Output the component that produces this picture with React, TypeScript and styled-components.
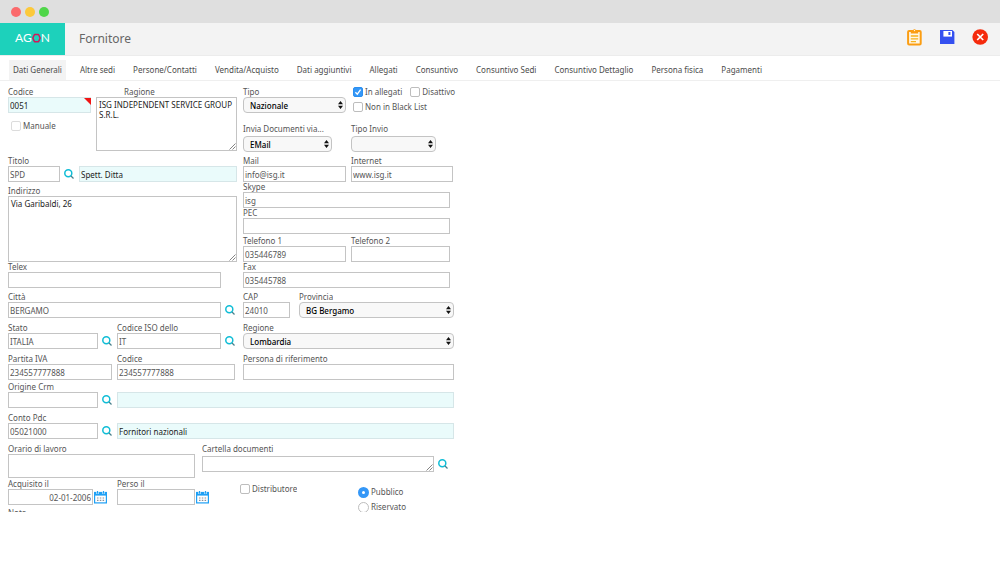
import React, { useId } from "react";
import styled, { createGlobalStyle, css } from "styled-components";

const Global = createGlobalStyle`
  *, *::before, *::after { box-sizing: border-box; }
  body { margin: 0; background: #fff; }
  body, button, input, select, textarea {
    font-family: "Noto Sans", "Open Sans", sans-serif;
    font-size: 8px;
    color: #555;
  }
`;

const TitleBar = styled.div`
  display: flex;
  align-items: center;
  gap: 4px;
  height: 23px;
  padding: 0 11px;
  background: #dfdfdf;
`;

const Dot = styled.span<{ $color: string }>`
  width: 10px;
  height: 10px;
  border-radius: 50%;
  background: ${(p) => p.$color};
`;

const Header = styled.header`
  display: flex;
  align-items: center;
  height: 33px;
  background: #f3f3f3;
  border-bottom: 1px solid #ececec;
`;

const Logo = styled.a`
  display: flex;
  align-items: center;
  justify-content: center;
  align-self: stretch;
  width: 65px;
  padding-bottom: 2px;
  background: #1dd1bb;
  color: #fff;
  font: 400 12px/12px Lato, sans-serif;
  text-decoration: none;
`;

const LogoRing = styled.svg`
  flex: none;
`;

const Title = styled.h1`
  flex: 1;
  margin: 0 0 0 14px;
  font-size: 12px;
  line-height: 16px;
  font-weight: 400;
  color: #666;
`;

const HeaderActions = styled.div`
  display: flex;
  align-items: center;
  gap: 16px;
  padding: 0 11px 4px 0;
`;

const IconButton = styled.button`
  display: block;
  flex: none;
  padding: 0;
  border: 0;
  background: none;
  line-height: 0;
  cursor: pointer;
`;

const Tabs = styled.nav`
  display: flex;
  align-items: flex-end;
  gap: 10px;
  height: 25px;
  padding-left: 9px;
  border-bottom: 1px solid #efefef;
`;

const Tab = styled.a<{ $active?: boolean }>`
  padding: 0 4px;
  line-height: 20px;
  color: #4c4c4c;
  text-decoration: none;
  white-space: nowrap;
  background: ${(p) => (p.$active ? "#f3f3f3" : "transparent")};
`;

const Form = styled.form`
  max-width: 462px;
  padding: 6px 8px 0;
`;

const Columns = styled.div`
  display: grid;
  grid-template-columns: 229fr 211fr;
  gap: 6px;
`;

const Column = styled.div`
  display: flex;
  flex-direction: column;
  min-width: 0;
`;

const Row = styled.div<{ $top?: number; $height?: number; $gap?: number }>`
  display: flex;
  align-items: flex-end;
  gap: ${(p) => p.$gap ?? 5}px;
  margin-top: ${(p) => p.$top ?? 0}px;
  ${(p) => p.$height && css`height: ${p.$height}px; align-items: flex-start;`}
`;

const FieldBox = styled.div<{ $w?: number }>`
  display: flex;
  flex-direction: column;
  min-width: 0;
  ${(p) => (p.$w ? css`flex: 0 0 ${p.$w}px;` : css`flex: 1;`)}
`;

const Label = styled.label<{ $clip?: number; $indent?: number; $loose?: boolean }>`
  height: ${(p) => (p.$loose ? 12 : 10)}px;
  line-height: 9px;
  padding-left: ${(p) => p.$indent ?? 0}px;
  white-space: nowrap;
  ${(p) => p.$clip && css`width: ${p.$clip}px; overflow: hidden;`}
`;

const control = css`
  display: block;
  width: 100%;
  margin: 0;
  border: 1px solid #c4c4c4;
  border-radius: 0;
  background: #fff;
  outline: none;
`;

const Input = styled.input<{ $tinted?: boolean; $tall?: boolean; $right?: boolean }>`
  ${control}
  height: ${(p) => (p.$tall ? 24 : 16)}px;
  padding: 1px 1px 0;
  text-align: ${(p) => (p.$right ? "right" : "left")};
  ${(p) => p.$tinted && css`background: #eafbfb; border-color: #d6e6e8; color: #222;`}
`;

const TextArea = styled.textarea<{ $h: number }>`
  ${control}
  height: ${(p) => p.$h}px;
  padding: 2px;
  line-height: 10px;
  color: #222;
  resize: none;
  overflow: hidden;
`;

const Overlay = styled.div<{ $w?: number }>`
  position: relative;
  ${(p) => p.$w && css`width: ${p.$w}px;`}
`;

const Grip = styled.svg`
  position: absolute;
  right: 1px;
  bottom: 1px;
  pointer-events: none;
`;

const Corner = styled.svg`
  position: absolute;
  right: 0;
  top: 1px;
  pointer-events: none;
`;

const Select = styled.select`
  ${control}
  appearance: none;
  height: 16px;
  padding: 0 14px 0 6px;
  border-radius: 4px;
  background: #f8f8f8;
  color: #000;
  font-weight: 500;
`;

const Arrows = styled.svg`
  position: absolute;
  right: 3px;
  top: 4px;
  pointer-events: none;
`;

const Lookup = styled(IconButton)`
  padding: 3px 0;
  margin-left: -1px;
`;

const Choices = styled.div<{ $w?: number }>`
  display: flex;
  flex-direction: column;
  gap: 5px;
  ${(p) => p.$w && css`width: ${p.$w}px;`}
`;

const ChoiceLine = styled.div`
  display: flex;
  gap: 8px;
`;

const Choice = styled.label<{ $clip?: number }>`
  display: inline-flex;
  align-items: center;
  gap: 2px;
  height: 10px;
  line-height: 10px;
  white-space: nowrap;
  ${(p) => p.$clip && css`width: ${p.$clip}px; overflow: hidden;`}
`;

const Check = styled.input`
  appearance: none;
  flex: none;
  width: 10px;
  height: 10px;
  margin: 0;
  border: 1px solid #bdbdbd;
  border-radius: 2px;
  background: #fff;
  &:checked {
    border-color: #2b8ff0;
    background: #3497f7;
  }
  &:disabled {
    border-color: #dcdcdc;
  }
`;

const CheckBoxHolder = styled.span`
  position: relative;
  display: inline-flex;
`;

const Tick = styled.svg`
  position: absolute;
  inset: 0;
  pointer-events: none;
`;

const Radio = styled.input`
  appearance: none;
  flex: none;
  width: 11px;
  height: 11px;
  margin: 0;
  border: 1px solid #bdbdbd;
  border-radius: 50%;
  background: #fff;
  &:checked {
    border: 4px solid #3497f7;
  }
`;

const Cut = styled.div`
  height: 4px;
  overflow: hidden;
`;

const ManualLine = styled.div`
  display: flex;
  padding: 8px 0 0 3px;
`;

function SearchButton({ label }: { label: string }) {
  return (
    <Lookup type="button" aria-label={label}>
      <svg width="10" height="10" viewBox="0 0 10 10" fill="none">
        <circle cx="4.3" cy="4.3" r="3.5" stroke="#10bdd6" strokeWidth="1.5" />
        <path d="M7 7l2.5 2.5" stroke="#47808c" strokeWidth="1.3" />
      </svg>
    </Lookup>
  );
}

const CalendarButtonBox = styled(IconButton)`
  margin-left: -4px;
  padding: 1px 0;
`;

function CalendarButton({ label }: { label: string }) {
  return (
    <CalendarButtonBox type="button" aria-label={label}>
      <svg width="13" height="14" viewBox="0 0 13 14">
        <rect x="0.6" y="2.5" width="11.8" height="10.4" fill="#fff" stroke="#1ea0f5" strokeWidth="1.2" />
        <path d="M0 2h13v3.6H0z" fill="#1ea0f5" />
        <path d="M3.5 1v3M9.5 1v3" stroke="#fff" strokeWidth="2.2" />
        <path d="M3.5 1v2.8M9.5 1v2.8" stroke="#1ea0f5" strokeWidth="1.2" />
        <path d="M3 8h7.5M3 10.4h7.5" stroke="#8a8f99" strokeWidth="1.2" strokeDasharray="1.5 1.3" />
      </svg>
    </CalendarButtonBox>
  );
}

type FieldProps = {
  label?: string;
  name?: string;
  w?: number;
  value?: string;
  tinted?: boolean;
  tall?: boolean;
  right?: boolean;
  required?: boolean;
};

function TextField({ label, name, w, value = "", tinted, tall, right, required }: FieldProps) {
  const id = useId();
  return (
    <FieldBox $w={w}>
      {label && <Label htmlFor={id}>{label}</Label>}
      <Overlay>
        <Input
          id={id}
          aria-label={label ? undefined : name}
          defaultValue={value}
          $tinted={tinted}
          $tall={tall}
          $right={right}
        />
        {required && (
          <Corner width="7" height="7">
            <path d="M0 0h7v7z" fill="#f01414" />
          </Corner>
        )}
      </Overlay>
    </FieldBox>
  );
}

type AreaProps = { label: string; w?: number; h: number; value?: string; indent?: number; loose?: boolean };

function AreaField({ label, w, h, value = "", indent, loose }: AreaProps) {
  const id = useId();
  return (
    <FieldBox $w={w}>
      <Label htmlFor={id} $indent={indent} $loose={loose}>{label}</Label>
      <Overlay>
        <TextArea id={id} defaultValue={value} $h={h} spellCheck={false} />
        <Grip width="7" height="7">
          <path d="M0.5 6.5l6-6M3.5 6.5l3-3" stroke="#777" strokeWidth="0.9" />
        </Grip>
      </Overlay>
    </FieldBox>
  );
}

type SelectProps = { label: string; w?: number; selectW?: number; value: string; clip?: number; loose?: boolean };

function SelectField({ label, w, selectW, value, clip, loose }: SelectProps) {
  const id = useId();
  return (
    <FieldBox $w={w}>
      <Label htmlFor={id} $clip={clip} $loose={loose}>{label}</Label>
      <Overlay $w={selectW}>
        <Select id={id} defaultValue={value}>
          <option value={value}>{value}</option>
        </Select>
        <Arrows width="5" height="8">
          <path d="M2.5 0L5 3.3H0zM2.5 8L5 4.7H0z" fill="#111" />
        </Arrows>
      </Overlay>
    </FieldBox>
  );
}

function CheckField({ label, checked, disabled, clip }: { label: string; checked?: boolean; disabled?: boolean; clip?: number }) {
  return (
    <Choice $clip={clip}>
      <CheckBoxHolder>
        <Check type="checkbox" defaultChecked={checked} disabled={disabled} />
        {checked && (
          <Tick width="10" height="10" fill="none">
            <path d="M2.4 5.2l1.9 2L7.6 2.7" stroke="#fff" strokeWidth="1.3" />
          </Tick>
        )}
      </CheckBoxHolder>
      {label}
    </Choice>
  );
}

const tabs = [
  "Dati Generali",
  "Altre sedi",
  "Persone/Contatti",
  "Vendita/Acquisto",
  "Dati aggiuntivi",
  "Allegati",
  "Consuntivo",
  "Consuntivo Sedi",
  "Consuntivo Dettaglio",
  "Persona fisica",
  "Pagamenti",
];

const DateGroup = styled.div<{ $w: number }>`
  display: flex;
  align-items: flex-end;
  gap: 5px;
  flex: 0 0 ${(p) => p.$w}px;
`;

const Flags = styled.div`
  display: flex;
  flex: 1;
  padding-top: 5px;
`;

const RadioGroup = styled(Choices)`
  padding-top: 3px;
`;

export default function App() {
  return (
    <>
      <Global />
      <TitleBar>
        <Dot $color="#fb6a6c" />
        <Dot $color="#fcc93a" />
        <Dot $color="#50d64a" />
      </TitleBar>
      <Header>
        <Logo href="#" aria-label="AGON">
          <span>AG</span>
          <LogoRing width="9" height="10" viewBox="0 0 9 10" fill="none">
            <path d="M2.5 1.5h4L8.2 5 6.5 8.7h-4L.8 5z" stroke="#d4145a" strokeWidth="1.5" strokeLinejoin="round" />
          </LogoRing>
          <span>N</span>
        </Logo>
        <Title>Fornitore</Title>
        <HeaderActions>
          <IconButton type="button" aria-label="Appunti">
            <svg width="17" height="18" viewBox="0 0 17 18" fill="none">
              <rect x="1.1" y="3" width="12.6" height="13.6" rx="1" fill="#fff7e6" stroke="#fb9d12" strokeWidth="2" />
              <path d="M3.8 2.2H6a1.6 1.6 0 0 1 3 0h2.2v3.3H3.8z" fill="#fb9d12" />
              <circle cx="7.5" cy="2.6" r="0.7" fill="#fff" />
              <path d="M3.8 8h7.4M3.8 10.8h7.4M3.8 13.6h5.2" stroke="#f7b21c" strokeWidth="1.3" />
            </svg>
          </IconButton>
          <IconButton type="button" aria-label="Salva">
            <svg width="16" height="16" viewBox="0 0 16 16">
              <path d="M0 1h12.4L14.4 3v12H0z" fill="#3450f0" />
              <path d="M3.4 2h8.6v5.6H3.4z" fill="#fff" />
              <path d="M8.4 3h2v3h-2z" fill="#3450f0" />
            </svg>
          </IconButton>
          <IconButton type="button" aria-label="Chiudi">
            <svg width="17" height="16" viewBox="0 0 17 16">
              <circle cx="8.2" cy="8" r="7.8" fill="#f52a0c" />
              <path d="M5.2 5l6 6M11.2 5l-6 6" stroke="#fff" strokeWidth="1.7" />
            </svg>
          </IconButton>
        </HeaderActions>
      </Header>
      <Tabs>
        {tabs.map((t, i) => (
          <Tab key={t} href="#" $active={i === 0}>
            {t}
          </Tab>
        ))}
      </Tabs>

      <Form>
        <Columns>
          <Column>
            <Row $height={69}>
              <FieldBox $w={83}>
                <TextField label="Codice" value="0051" tinted required />
                <ManualLine>
                  <CheckField label="Manuale" disabled />
                </ManualLine>
              </FieldBox>
              <AreaField label="Ragione" h={54} value="ISG INDEPENDENT SERVICE GROUP S.R.L." indent={28} />
            </Row>
            <Row>
              <TextField label="Titolo" w={52} value="SPD" />
              <SearchButton label="Cerca titolo" />
              <TextField name="Descrizione titolo" value="Spett. Ditta" tinted />
            </Row>
            <Row $top={4}>
              <AreaField label="Indirizzo" h={66} value="Via Garibaldi, 26" />
            </Row>
            <Row>
              <TextField label="Telex" w={213} />
            </Row>
            <Row $top={4}>
              <TextField label="Città" w={213} value="BERGAMO" />
              <SearchButton label="Cerca città" />
            </Row>
            <Row $top={5}>
              <TextField label="Stato" w={90} value="ITALIA" />
              <SearchButton label="Cerca stato" />
              <TextField label="Codice ISO dello" w={104} value="IT" />
              <SearchButton label="Cerca codice ISO" />
            </Row>
            <Row $top={5}>
              <TextField label="Partita IVA" w={104} value="234557777888" />
              <TextField label="Codice" w={118} value="234557777888" />
            </Row>
          </Column>

          <Column>
            <Row $height={37} $gap={7}>
              <SelectField label="Tipo" w={103} value="Nazionale" />
              <Choices>
                <ChoiceLine>
                  <CheckField label="In allegati" checked />
                  <CheckField label="Disattivo" />
                </ChoiceLine>
                <CheckField label="Non in Black List" />
              </Choices>
            </Row>
            <Row>
              <SelectField label="Invia Documenti via..." w={103} selectW={89} value="EMail" loose />
              <SelectField label="Tipo Invio" w={85} value="" loose />
            </Row>
            <Row $top={4}>
              <TextField label="Mail" w={103} value="info@isg.it" />
              <TextField label="Internet" w={102} value="www.isg.it" />
            </Row>
            <Row>
              <TextField label="Skype" w={207} value="isg" />
            </Row>
            <Row>
              <TextField label="PEC" w={207} />
            </Row>
            <Row $top={2}>
              <TextField label="Telefono 1" w={103} value="035446789" />
              <TextField label="Telefono 2" w={99} />
            </Row>
            <Row>
              <TextField label="Fax" w={207} value="035445788" />
            </Row>
            <Row $top={4} $gap={9}>
              <TextField label="CAP" w={47} value="24010" />
              <SelectField label="Provincia" value="BG Bergamo" clip={34} />
            </Row>
            <Row $top={5}>
              <SelectField label="Regione" value="Lombardia" />
            </Row>
            <Row $top={5}>
              <TextField label="Persona di riferimento" />
            </Row>
          </Column>
        </Columns>

        <Row $top={2}>
          <TextField label="Origine Crm" w={90} />
          <SearchButton label="Cerca origine" />
          <TextField name="Descrizione origine" tinted />
        </Row>
        <Row $top={5}>
          <TextField label="Conto Pdc" w={90} value="05021000" />
          <SearchButton label="Cerca conto" />
          <TextField name="Descrizione conto" value="Fornitori nazionali" tinted />
        </Row>
        <Row $top={5} $height={34} $gap={7}>
          <TextField label="Orario di lavoro" w={187} tall />
          <Row>
            <AreaField label="Cartella documenti" w={232} h={16} loose />
            <SearchButton label="Cerca cartella" />
          </Row>
        </Row>
        <Row $top={1} $height={29}>
          <DateGroup $w={104}>
            <TextField label="Acquisito il" w={85} value="02-01-2006" right />
            <CalendarButton label="Scegli data acquisizione" />
          </DateGroup>
          <DateGroup $w={118}>
            <TextField label="Perso il" w={78} />
            <CalendarButton label="Scegli data perdita" />
          </DateGroup>
          <Flags>
            <Choices $w={118}>
              <CheckField label="Distributore" clip={57} />
            </Choices>
            <RadioGroup role="radiogroup" aria-label="Visibilità">
              <Choice>
                <Radio type="radio" name="visibility" defaultChecked />
                Pubblico
              </Choice>
              <Choice>
                <Radio type="radio" name="visibility" />
                Riservato
              </Choice>
            </RadioGroup>
          </Flags>
        </Row>
        <Cut>
          <Label as="div">Note</Label>
        </Cut>
      </Form>
    </>
  );
}
